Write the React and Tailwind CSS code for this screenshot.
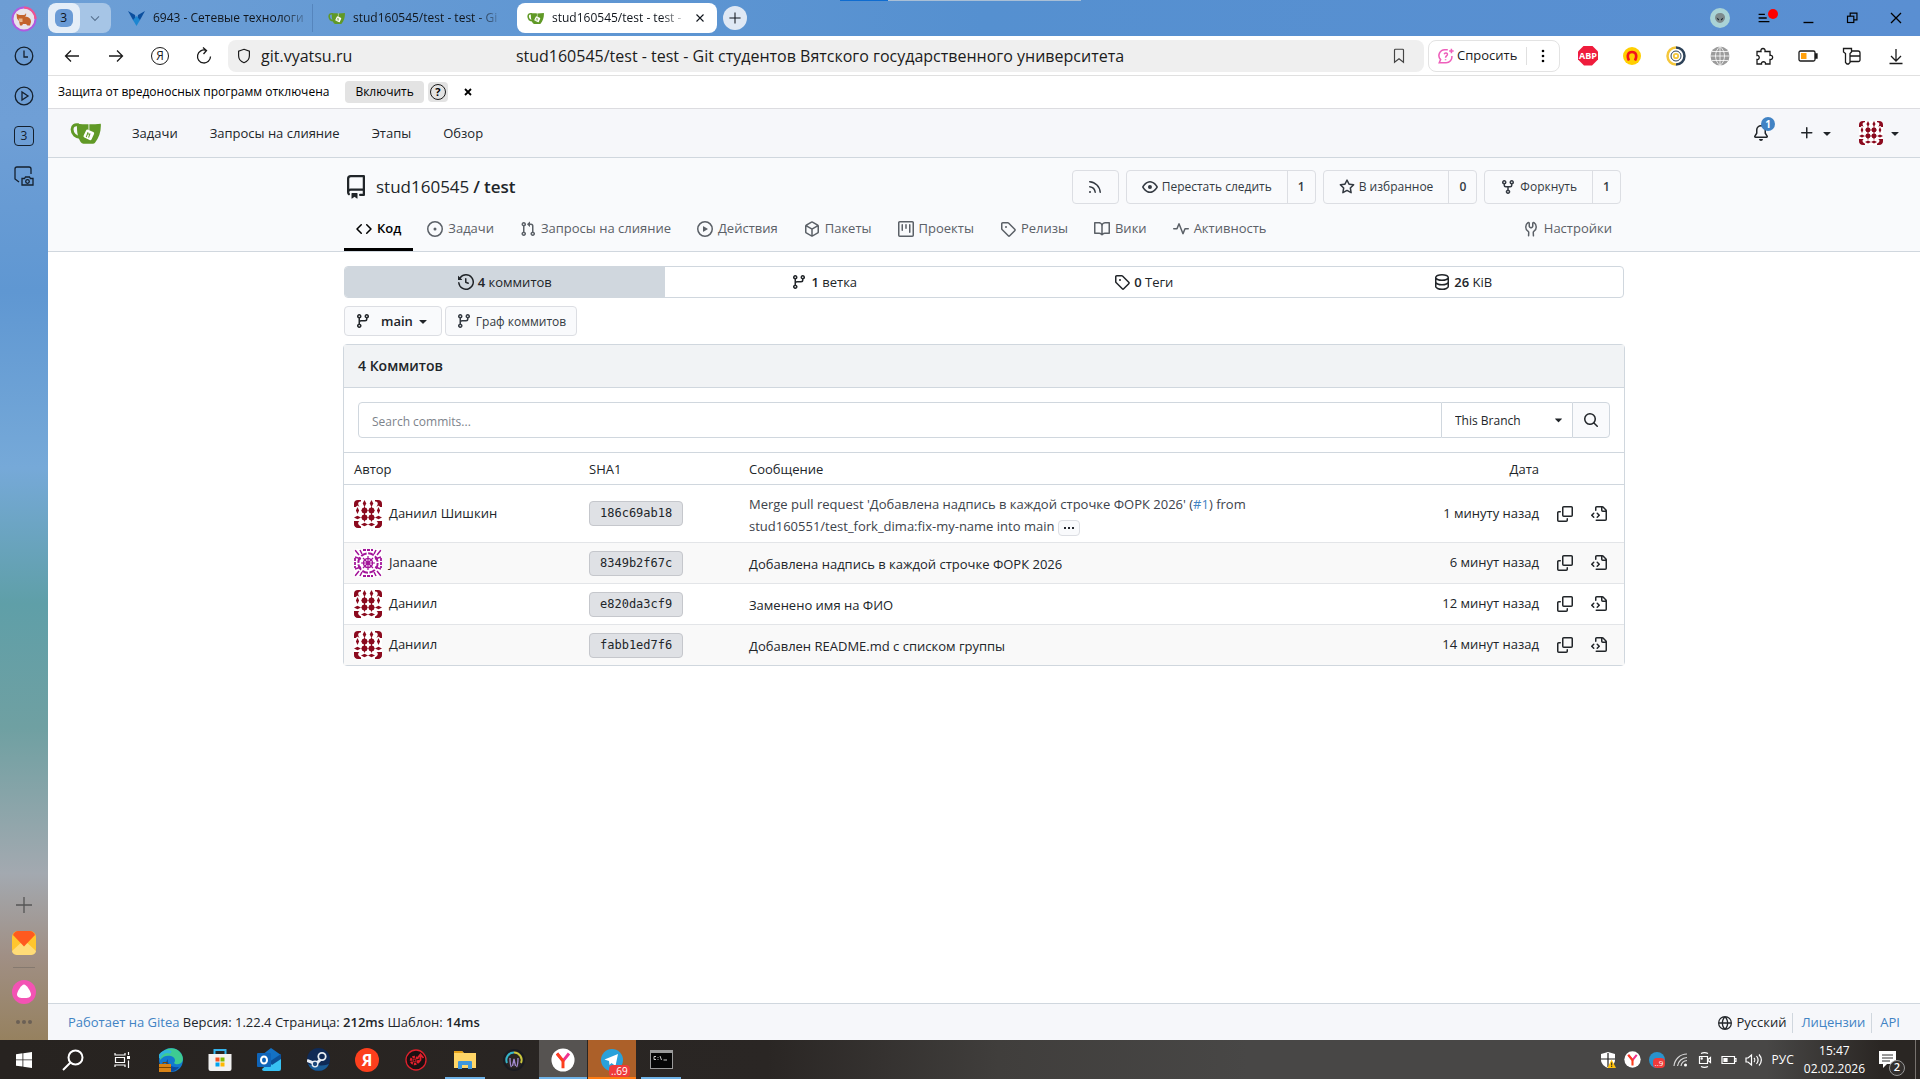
import React, { useState } from 'react';

// 16px octicons
const ICONS = {
    code: 'M4.72 3.22a.75.75 0 0 1 1.06 1.06L2.06 8l3.72 3.72a.75.75 0 1 1-1.06 1.06L.47 8.53a.75.75 0 0 1 0-1.06l4.25-4.25Zm6.56 0a.75.75 0 1 0-1.06 1.06L13.94 8l-3.72 3.72a.75.75 0 1 0 1.06 1.06l4.25-4.25a.75.75 0 0 0 0-1.06l-4.25-4.25Z',
    repo: 'M2 2.5A2.5 2.5 0 0 1 4.5 0h8.75a.75.75 0 0 1 .75.75v12.5a.75.75 0 0 1-.75.75h-2.5a.75.75 0 0 1 0-1.5h1.75v-2h-8a1 1 0 0 0-.714 1.7.75.75 0 1 1-1.072 1.05A2.495 2.495 0 0 1 2 11.5Zm10.5-1h-8a1 1 0 0 0-1 1v6.708A2.486 2.486 0 0 1 4.5 9h8ZM5 12.25a.25.25 0 0 1 .25-.25h3.5a.25.25 0 0 1 .25.25v3.25a.25.25 0 0 1-.4.2l-1.45-1.087a.249.249 0 0 0-.3 0L5.4 15.7a.25.25 0 0 1-.4-.2Z',
    issue: 'M8 9.5a1.5 1.5 0 1 0 0-3 1.5 1.5 0 0 0 0 3ZM8 0a8 8 0 1 1 0 16A8 8 0 0 1 8 0ZM1.5 8a6.5 6.5 0 1 0 13 0 6.5 6.5 0 0 0-13 0Z',
    pull: 'M1.5 3.25a2.25 2.25 0 1 1 3 2.122v5.256a2.251 2.251 0 1 1-1.5 0V5.372A2.25 2.25 0 0 1 1.5 3.25Zm5.677-.177L9.573.677A.25.25 0 0 1 10 .854V2.5h1A2.5 2.5 0 0 1 13.5 5v5.628a2.251 2.251 0 1 1-1.5 0V5a1 1 0 0 0-1-1h-1v1.646a.25.25 0 0 1-.427.177L7.177 3.427a.25.25 0 0 1 0-.354ZM3.75 2.5a.75.75 0 1 0 0 1.5.75.75 0 0 0 0-1.5Zm0 9.5a.75.75 0 1 0 0 1.5.75.75 0 0 0 0-1.5Zm8.25.75a.75.75 0 1 0 1.5 0 .75.75 0 0 0-1.5 0Z',
    play: 'M8 0a8 8 0 1 1 0 16A8 8 0 0 1 8 0ZM1.5 8a6.5 6.5 0 1 0 13 0 6.5 6.5 0 0 0-13 0Zm4.879-2.773 4.264 2.559a.25.25 0 0 1 0 .428l-4.264 2.559A.25.25 0 0 1 6 10.559V5.442a.25.25 0 0 1 .379-.215Z',
    package: 'm8.878.392 5.25 3.045c.54.314.872.89.872 1.514v6.098a1.75 1.75 0 0 1-.872 1.514l-5.25 3.045a1.75 1.75 0 0 1-1.756 0l-5.25-3.045A1.75 1.75 0 0 1 1 11.049V4.951c0-.624.332-1.201.872-1.514L7.122.392a1.75 1.75 0 0 1 1.756 0ZM7.875 1.69l-4.63 2.685L8 7.133l4.755-2.758-4.63-2.685a.248.248 0 0 0-.25 0ZM2.5 5.677v5.372c0 .09.047.171.125.216l4.625 2.683V8.432Zm6.25 8.271 4.625-2.683a.25.25 0 0 0 .125-.216V5.677L8.75 8.432Z',
    project: 'M1.75 0h12.5C15.216 0 16 .784 16 1.75v12.5A1.75 1.75 0 0 1 14.25 16H1.75A1.75 1.75 0 0 1 0 14.25V1.75C0 .784.784 0 1.75 0ZM1.5 1.75v12.5c0 .138.112.25.25.25h12.5a.25.25 0 0 0 .25-.25V1.75a.25.25 0 0 0-.25-.25H1.75a.25.25 0 0 0-.25.25ZM11.75 3a.75.75 0 0 1 .75.75v7.5a.75.75 0 0 1-1.5 0v-7.5a.75.75 0 0 1 .75-.75Zm-8.25.75a.75.75 0 0 1 1.5 0v5.5a.75.75 0 0 1-1.5 0ZM8 3a.75.75 0 0 1 .75.75v3.5a.75.75 0 0 1-1.5 0v-3.5A.75.75 0 0 1 8 3Z',
    tag: 'M1 7.775V2.75C1 1.784 1.784 1 2.75 1h5.025c.464 0 .91.184 1.238.513l6.25 6.25a1.75 1.75 0 0 1 0 2.474l-5.026 5.026a1.75 1.75 0 0 1-2.474 0l-6.25-6.25A1.752 1.752 0 0 1 1 7.775Zm1.5 0c0 .066.026.13.073.177l6.25 6.25a.25.25 0 0 0 .354 0l5.025-5.025a.25.25 0 0 0 0-.354l-6.25-6.25a.25.25 0 0 0-.177-.073H2.75a.25.25 0 0 0-.25.25ZM6 5a1 1 0 1 1 0 2 1 1 0 0 1 0-2Z',
    book: 'M0 1.75A.75.75 0 0 1 .75 1h4.253c1.227 0 2.317.59 3 1.501A3.743 3.743 0 0 1 11.006 1h4.245a.75.75 0 0 1 .75.75v10.5a.75.75 0 0 1-.75.75h-4.507a2.25 2.25 0 0 0-1.591.659l-.622.621a.75.75 0 0 1-1.06 0l-.622-.621A2.25 2.25 0 0 0 5.258 13H.75a.75.75 0 0 1-.75-.75Zm7.251 10.324.004-5.073-.002-2.253A2.25 2.25 0 0 0 5.003 2.5H1.5v9h3.757a3.75 3.75 0 0 1 1.994.574ZM8.755 4.75l-.004 7.322a3.752 3.752 0 0 1 1.992-.572H14.5v-9h-3.495a2.25 2.25 0 0 0-2.25 2.25Z',
    pulse: 'M6 2c.306 0 .582.187.696.471L10 10.731l1.304-3.26A.751.751 0 0 1 12 7h3.25a.75.75 0 0 1 0 1.5h-2.742l-1.812 4.528a.751.751 0 0 1-1.392 0L6 4.77 4.696 8.03A.75.75 0 0 1 4 8.5H.75a.75.75 0 0 1 0-1.5h2.742l1.812-4.529A.751.751 0 0 1 6 2Z',
    tools: 'M5.433 2.304A4.492 4.492 0 0 0 3.5 6c0 1.598.832 3.002 2.09 3.802.518.328.929.923.902 1.64v.008l-.164 3.337a.75.75 0 1 1-1.498-.073l.163-3.33c.002-.085-.05-.216-.207-.316A5.996 5.996 0 0 1 2 6a5.993 5.993 0 0 1 2.567-4.92 1.482 1.482 0 0 1 1.673-.04c.462.296.76.827.76 1.423v2.82c0 .082.041.16.11.206l.75.51a.25.25 0 0 0 .28 0l.75-.51A.249.249 0 0 0 9 5.282V2.463c0-.596.298-1.127.76-1.423a1.482 1.482 0 0 1 1.673.04A5.993 5.993 0 0 1 14 6a5.996 5.996 0 0 1-2.786 5.068c-.157.1-.209.23-.207.315l.163 3.33a.752.752 0 0 1-1.094.714.75.75 0 0 1-.404-.64l-.164-3.345c-.027-.717.384-1.312.902-1.64A4.495 4.495 0 0 0 12.5 6a4.492 4.492 0 0 0-1.933-3.696c-.024.017-.067.067-.067.16v2.818a1.75 1.75 0 0 1-.767 1.448l-.75.51a1.75 1.75 0 0 1-1.966 0l-.75-.51A1.75 1.75 0 0 1 5.5 5.282V2.463c0-.092-.043-.142-.067-.159Z',
    history: 'm.427 1.927 1.215 1.215a8.002 8.002 0 1 1-1.6 5.685.75.75 0 1 1 1.493-.154 6.5 6.5 0 1 0 1.18-4.458l1.358 1.358A.25.25 0 0 1 3.896 6H.25A.25.25 0 0 1 0 5.75V2.104a.25.25 0 0 1 .427-.177ZM7.75 4a.75.75 0 0 1 .75.75v2.992l2.028.812a.75.75 0 0 1-.557 1.392l-2.5-1A.751.751 0 0 1 7 8.25v-3.5A.75.75 0 0 1 7.75 4Z',
    branch: 'M9.5 3.25a2.25 2.25 0 1 1 3 2.122V6A2.5 2.5 0 0 1 10 8.5H6a1 1 0 0 0-1 1v1.128a2.251 2.251 0 1 1-1.5 0V5.372a2.25 2.25 0 1 1 1.5 0v1.836A2.493 2.493 0 0 1 6 7h4a1 1 0 0 0 1-1v-.628A2.25 2.25 0 0 1 9.5 3.25Zm-6 0a.75.75 0 1 0 1.5 0 .75.75 0 0 0-1.5 0Zm8.25-.75a.75.75 0 1 0 0 1.5.75.75 0 0 0 0-1.5ZM4.25 12a.75.75 0 1 0 0 1.5.75.75 0 0 0 0-1.5Z',
    fork: 'M5 5.372v.878c0 .414.336.75.75.75h4.5a.75.75 0 0 0 .75-.75v-.878a2.25 2.25 0 1 1 1.5 0v.878a2.25 2.25 0 0 1-2.25 2.25h-1.5v2.128a2.251 2.251 0 1 1-1.5 0V8.5h-1.5A2.25 2.25 0 0 1 3.5 6.25v-.878a2.25 2.25 0 1 1 1.5 0ZM5 3.25a.75.75 0 1 0-1.5 0 .75.75 0 0 0 1.5 0Zm6.75.75a.75.75 0 1 0 0-1.5.75.75 0 0 0 0 1.5Zm-3 8.75a.75.75 0 1 0-1.5 0 .75.75 0 0 0 1.5 0Z',
    database: 'M1 3.5c0-.626.292-1.165.7-1.59.406-.422.956-.767 1.579-1.041C4.525.32 6.195 0 8 0c1.805 0 3.475.32 4.722.869.622.274 1.172.62 1.578 1.04.408.426.7.965.7 1.591v9c0 .626-.292 1.165-.7 1.59-.406.422-.956.767-1.579 1.041C11.476 15.68 9.806 16 8 16c-1.805 0-3.475-.32-4.721-.869-.623-.274-1.173-.62-1.579-1.04-.408-.426-.7-.965-.7-1.591Zm1.5 0c0 .133.058.318.282.551.227.237.591.483 1.101.707C4.898 5.205 6.353 5.5 8 5.5c1.646 0 3.101-.295 4.118-.742.508-.224.873-.471 1.1-.708.224-.232.282-.417.282-.55 0-.133-.058-.318-.282-.551-.227-.237-.591-.483-1.101-.707C11.102 1.795 9.647 1.5 8 1.5c-1.646 0-3.101.295-4.118.742-.508.224-.873.471-1.1.708-.224.232-.282.417-.282.55Zm0 4.5c0 .133.058.318.282.551.227.237.591.483 1.101.707C4.898 9.705 6.353 10 8 10c1.646 0 3.101-.295 4.118-.742.508-.224.873-.471 1.1-.708.224-.232.282-.417.282-.55V5.724c-.241.15-.503.286-.778.407C11.475 6.68 9.805 7 8 7c-1.805 0-3.475-.32-4.721-.869a6.15 6.15 0 0 1-.779-.407Zm0 2.225V12.5c0 .133.058.318.282.55.227.237.592.484 1.1.708 1.016.447 2.471.742 4.118.742 1.647 0 3.102-.295 4.117-.742.51-.224.874-.47 1.101-.707.224-.233.282-.418.282-.551v-2.275c-.241.15-.503.285-.778.406-1.247.549-2.917.869-4.722.869-1.805 0-3.475-.32-4.721-.869a6.327 6.327 0 0 1-.779-.406Z',
    rss: 'M2.002 2.725a.75.75 0 0 1 .797-.699C8.79 2.42 13.58 7.21 13.974 13.201a.75.75 0 0 1-1.497.098 10.502 10.502 0 0 0-9.776-9.776.747.747 0 0 1-.7-.798ZM2.84 7.05h-.002a7.002 7.002 0 0 1 6.113 6.111.75.75 0 0 1-1.49.178 5.503 5.503 0 0 0-4.8-4.8.75.75 0 0 1 .179-1.489ZM2 13a1 1 0 1 1 2 0 1 1 0 0 1-2 0Z',
    eye: 'M8 2c1.981 0 3.671.992 4.933 2.078 1.27 1.091 2.187 2.345 2.637 3.023a1.62 1.62 0 0 1 0 1.798c-.45.678-1.367 1.932-2.637 3.023C11.67 13.008 9.981 14 8 14c-1.981 0-3.671-.992-4.933-2.078C1.797 10.83.88 9.576.43 8.898a1.62 1.62 0 0 1 0-1.798c.45-.677 1.367-1.931 2.637-3.022C4.33 2.992 6.019 2 8 2ZM1.679 7.932a.12.12 0 0 0 0 .136c.411.622 1.241 1.75 2.366 2.717C5.176 11.758 6.527 12.5 8 12.5c1.473 0 2.825-.742 3.955-1.715 1.124-.967 1.954-2.096 2.366-2.717a.12.12 0 0 0 0-.136c-.412-.621-1.242-1.75-2.366-2.717C10.824 4.242 9.473 3.5 8 3.5c-1.473 0-2.825.742-3.955 1.715-1.124.967-1.954 2.096-2.366 2.717ZM8 10a2 2 0 1 1-.001-3.999A2 2 0 0 1 8 10Z',
    star: 'M8 .25a.75.75 0 0 1 .673.418l1.882 3.815 4.21.612a.75.75 0 0 1 .416 1.279l-3.046 2.97.719 4.192a.751.751 0 0 1-1.088.791L8 12.347l-3.766 1.98a.75.75 0 0 1-1.088-.79l.72-4.194L.818 6.374a.75.75 0 0 1 .416-1.28l4.21-.611L7.327.668A.75.75 0 0 1 8 .25Zm0 2.445L6.615 5.5a.75.75 0 0 1-.564.41l-3.097.45 2.24 2.184a.75.75 0 0 1 .216.664l-.528 3.084 2.769-1.456a.75.75 0 0 1 .698 0l2.77 1.456-.53-3.084a.75.75 0 0 1 .216-.664l2.24-2.183-3.096-.45a.75.75 0 0 1-.564-.41L8 2.694Z',
    copy: 'M0 6.75C0 5.784.784 5 1.75 5h1.5a.75.75 0 0 1 0 1.5h-1.5a.25.25 0 0 0-.25.25v7.5c0 .138.112.25.25.25h7.5a.25.25 0 0 0 .25-.25v-1.5a.75.75 0 0 1 1.5 0v1.5A1.75 1.75 0 0 1 9.25 16h-7.5A1.75 1.75 0 0 1 0 14.25ZM5 1.75C5 .784 5.784 0 6.75 0h7.5C15.216 0 16 .784 16 1.75v7.5A1.75 1.75 0 0 1 14.25 11h-7.5A1.75 1.75 0 0 1 5 9.25Zm1.75-.25a.25.25 0 0 0-.25.25v7.5c0 .138.112.25.25.25h7.5a.25.25 0 0 0 .25-.25v-7.5a.25.25 0 0 0-.25-.25Z',
    search: 'M10.68 11.74a6 6 0 0 1-7.922-8.982 6 6 0 0 1 8.982 7.922l3.04 3.04a.749.749 0 0 1-.326 1.275.749.749 0 0 1-.734-.215ZM11.5 7a4.499 4.499 0 1 0-8.997 0A4.499 4.499 0 0 0 11.5 7Z',
    bell: 'M8 16a2 2 0 0 0 1.985-1.75c.017-.137-.097-.25-.235-.25h-3.5c-.138 0-.252.113-.235.25A2 2 0 0 0 8 16ZM3 5a5 5 0 0 1 10 0v2.947c0 .05.015.098.042.139l1.703 2.555A1.519 1.519 0 0 1 13.482 13H2.518a1.516 1.516 0 0 1-1.263-2.36l1.703-2.554A.255.255 0 0 0 3 7.947Zm5-3.5A3.5 3.5 0 0 0 4.5 5v2.947c0 .346-.102.683-.294.97l-1.703 2.556a.017.017 0 0 0-.003.01l.001.006.004.006.006.004.007.001h10.964l.007-.001.006-.004.004-.006.001-.007a.017.017 0 0 0-.003-.01l-1.703-2.554a1.745 1.745 0 0 1-.294-.97V5A3.5 3.5 0 0 0 8 1.5Z',
    plus: 'M7.75 2a.75.75 0 0 1 .75.75V7h4.25a.75.75 0 0 1 0 1.5H8.5v4.25a.75.75 0 0 1-1.5 0V8.5H2.75a.75.75 0 0 1 0-1.5H7V2.75A.75.75 0 0 1 7.75 2Z',
    caret: 'm4.427 7.427 3.396 3.396a.25.25 0 0 0 .354 0l3.396-3.396A.25.25 0 0 0 11.396 7H4.604a.25.25 0 0 0-.177.427Z',
    globe: 'M8 0a8 8 0 1 1 0 16A8 8 0 0 1 8 0ZM5.78 8.75a9.64 9.64 0 0 0 1.363 4.177c.255.426.542.832.857 1.215.245-.296.551-.705.857-1.215A9.64 9.64 0 0 0 10.22 8.75Zm4.44-1.5a9.64 9.64 0 0 0-1.363-4.177c-.307-.51-.612-.919-.857-1.215a9.927 9.927 0 0 0-.857 1.215A9.64 9.64 0 0 0 5.78 7.25Zm-5.944 1.5H1.543a6.507 6.507 0 0 0 4.666 5.5c-.123-.181-.24-.365-.352-.552-.715-1.192-1.437-2.874-1.581-4.948Zm-2.733-1.5h2.733c.144-2.074.866-3.756 1.58-4.948.12-.197.237-.381.353-.552a6.507 6.507 0 0 0-4.666 5.5Zm10.181 1.5c-.144 2.074-.866 3.756-1.58 4.948-.12.197-.237.381-.353.552a6.507 6.507 0 0 0 4.666-5.5Zm2.733-1.5a6.507 6.507 0 0 0-4.666-5.5c.123.181.24.365.353.552.714 1.192 1.436 2.874 1.58 4.948Z',
    file: 'M4 1.75C4 .784 4.784 0 5.75 0h5.586c.464 0 .909.184 1.237.513l2.914 2.914c.329.328.513.773.513 1.237v8.586A1.75 1.75 0 0 1 14.25 15h-9a.75.75 0 0 1 0-1.5h9a.25.25 0 0 0 .25-.25V6h-2.75A1.75 1.75 0 0 1 10 4.25V1.5H5.75a.25.25 0 0 0-.25.25v2.5a.75.75 0 0 1-1.5 0Zm1.72 4.97a.75.75 0 0 1 1.06 0l2 2a.75.75 0 0 1 0 1.06l-2 2a.749.749 0 0 1-1.275-.326.749.749 0 0 1 .215-.734l1.47-1.47-1.47-1.47a.75.75 0 0 1 0-1.06ZM3.28 7.78 1.81 9.25l1.47 1.47a.751.751 0 0 1-.018 1.042.751.751 0 0 1-1.042.018l-2-2a.75.75 0 0 1 0-1.06l2-2a.751.751 0 0 1 1.042.018.751.751 0 0 1 .018 1.042Zm8.22-6.218V4.25c0 .138.112.25.25.25h2.688l-.011-.013-2.914-2.914-.013-.011Z',
};

const Icon = ({ name, size = 16 }) => (
    <svg width={size} height={size} viewBox="0 0 16 16" fill="currentColor" className="shrink-0" aria-hidden="true">
        <path fillRule="evenodd" d={ICONS[name]} />
    </svg>
);

// Thin outline glyphs used by the browser chrome
const Line = ({ d, size = 20, width = 1.3, children }) => (
    <svg width={size} height={size} viewBox="0 0 20 20" fill="none" stroke="currentColor" strokeWidth={width} className="shrink-0" aria-hidden="true">
        {d && <path d={d} />}
        {children}
    </svg>
);

const GiteaLogo = ({ size = 30 }) => (
    <svg width={size} height={size} viewBox="0 0 30 30" className="shrink-0" aria-hidden="true">
        <path d="M8.500 6.800C4.500 6 2 7.500 2 11c0 4.500 3.500 7.800 8.500 8" fill="none" stroke="#609926" strokeWidth="2.800" />
        <path d="M7 5.500c6 .8 16 .8 22.800 0 .5 7-1.600 13.600-5.600 18.400-.5.600-1.200.9-2 .9H13c-1 0-1.900-.5-2.500-1.300C8 20 6 13 7 5.500Z" fill="#609926" />
        <rect x="14" y="12" width="8.500" height="8.500" rx="1.500" fill="#fff" transform="rotate(25 18.200 16.200)" />
        <path d="M17.500 13.800l-1.800 4.700M17.200 15.500h2l-1.200 3.500" stroke="#609926" strokeWidth="1" fill="none" />
        <path d="M18.300 5.800v6.500" stroke="#fff" strokeWidth=".8" />
    </svg>
);

const RedIdenticon = ({ size = 28 }) => (
    <svg width={size} height={size} viewBox="0 0 28 28" className="shrink-0 rounded-sm" aria-hidden="true">
        <rect width="28" height="28" fill="#fff" />
        <g fill="#8b0a1e">
            <path d="M0 0H7V1.500C4.500 1.500 3 3 5.500 7 4 6 3 5 2 7H0ZM28 0H21V1.500C23.500 1.500 25 3 22.500 7 24 6 25 5 26 7H28Z" />
            <path d="M0 21H5.500C3.500 22.500 3.500 24.500 7 26.500V28H2L0 26ZM28 21H22.500C24.500 22.500 24.500 24.500 21 26.500V28H26L28 26Z" />
            {[10.5, 17.5].map((x) => (
                <React.Fragment key={x}>
                    <path d={`M${x} 0l1.800 3.500-1.800 3.500-1.800-3.500Z`} />
                    <circle cx={x} cy="10.500" r="2.900" />
                    <circle cx={x} cy="17.500" r="2.900" />
                    <path d={`M${x - 3.5} 24.500l3.500-1.700 3.500 1.700-3.500 1.700Z`} />
                    <path d={`M${x - 0.5} 6.500h1v15h-1ZM${x - 3} 10h6v1h-6ZM${x - 3} 17h6v1h-6Z`} />
                </React.Fragment>
            ))}
            <path d="M3.500 7l1.600 3.500L3.500 14l-1.600-3.500ZM24.500 7l1.600 3.500-1.600 3.500-1.600-3.500Z" />
            <path d="M0 17.500l3.500-1.800L7 17.500l-3.500 1.800ZM21 17.500l3.500-1.800 3.500 1.800-3.500 1.800Z" />
        </g>
    </svg>
);

const PurpleIdenticon = () => (
    <svg width="28" height="28" viewBox="0 0 28 28" className="shrink-0 rounded-sm" aria-hidden="true">
        <rect width="28" height="28" fill="#fff" />
        <g fill="none" stroke="#a3159a" strokeWidth="1.500">
            <circle cx="14" cy="14" r="9.700" strokeWidth="2" strokeDasharray="6 1.600" />
            <circle cx="14" cy="14" r="4.500" />
            <path d="M9 9l10 10M19 9L9 19M14 7v14M7 14h14" strokeWidth="1.200" />
            <path d="M1 9v10M27 9v10M9 1h10M9 27h10" strokeWidth="1.800" strokeDasharray="3 1" />
            <path d="M1 1l4 5M27 1l-4 5M1 27l4-5M27 27l-4-5M1 8l6 2M27 8l-6 2M1 20l6-2M27 20l-6-2M6 1l2 4M22 1l-2 4M6 27l2-4M22 27l-2-4" />
        </g>
        <circle cx="14" cy="14" r="1.800" fill="#a3159a" />
    </svg>
);

const YandexY = ({ size = 26 }) => (
    <svg width={size} height={size} viewBox="0 0 26 26" aria-hidden="true">
        <circle cx="13" cy="13" r="12.500" fill="#fff" />
        <path d="M6.500 6l6.500 8 6.500-8" stroke="#f0338f" strokeWidth="3.200" fill="none" />
        <path d="M6.500 6L13 14v8" stroke="#fc3f1d" strokeWidth="3.200" fill="none" />
    </svg>
);

const BROWSER_TABS = [
    { title: '6943 - Сетевые технологи', icon: 'moodle' },
    { title: 'stud160545/test - test - Gi', icon: 'gitea' },
    { title: 'stud160545/test - test -', icon: 'gitea', active: true },
];

const TabStrip = () => (
    <div className="relative flex h-9 items-center bg-gradient-to-r from-[#6d9fd6] via-[#5590d0] to-[#5a8fd2] pr-0.5 text-sm text-[#10151c]">
        <div className="absolute left-[792px] top-0 flex h-px w-[241px]">
            <span className="w-12 bg-[#0f6cd0]" />
            <span className="grow bg-[#a9bfd6]" />
        </div>
        <div className="flex h-[30px] w-[63px] shrink-0 overflow-hidden rounded-lg bg-white/40">
            <button type="button" className="flex w-8 items-center justify-center rounded-lg bg-white/70">
                <span className="flex h-[18px] w-[18px] items-center justify-center rounded-md bg-[#6a9bd6] text-xs">3</span>
            </button>
            <button type="button" aria-label="Группы вкладок" className="flex w-8 items-center justify-center text-[#56718f]">
                <Line d="M5 8l5 5 5-5" size={16} />
            </button>
        </div>
        <div className="ml-1.5 flex items-center">
            {BROWSER_TABS.map((tab, i) => (
                <div
                    key={i}
                    className={tab.active
                        ? 'flex h-[30px] w-[200px] items-center gap-2 rounded-lg bg-white px-2.5'
                        : 'flex h-[30px] w-[200px] items-center gap-2 px-[11px]'}
                >
                    {tab.icon === 'gitea' ? <GiteaLogo size={17} /> : (
                        <svg width="17" height="17" viewBox="0 0 17 17" className="shrink-0" aria-hidden="true">
                            <path d="M0 1l7 4 1 6-3-1Z" fill="#0b4f9e" />
                            <path d="M17 1l-7 4-1 6 3-1Z" fill="#0b4f9e" />
                            <path d="M5 10l3.500-4L12 10l-3.500 6Z" fill="#1c86d1" />
                        </svg>
                    )}
                    <span className="whitespace-nowrap bg-[linear-gradient(to_right,#10151c_85%,#10151c40)] bg-clip-text text-xs text-transparent">
                        {tab.title}
                    </span>
                    {tab.active && (
                        <button type="button" aria-label="Закрыть вкладку" className="ml-auto"><Line d="M5 5l10 10M15 5L5 15" size={14} width={1.600} /></button>
                    )}
                    {i === 0 && <span className="ml-auto h-7 w-px shrink-0 bg-[#5585bd]" />}
                </div>
            ))}
        </div>
        <button type="button" aria-label="Новая вкладка" className="ml-1.5 flex h-6 w-6 items-center justify-center rounded-full bg-[#dfe8f4]">
            <Line d="M10 3v14M3 10h14" size={16} />
        </button>
        <div className="ml-auto flex items-center text-black">
            <button type="button" aria-label="Профиль" className="flex w-11 justify-center">
                <svg width="20" height="20" viewBox="0 0 20 20" aria-hidden="true">
                    <circle cx="10" cy="10" r="10" fill="#a9d3d6" />
                    <path d="M10 5c3 0 5 2 5 4.500S12.500 15 10 15s-5-3-5-5.500S7 5 10 5Z" fill="#7d8a8c" />
                    <path d="M6.500 9.500l2.700 1.700-1 1.300ZM13.500 9.500l-2.700 1.700 1 1.300Z" fill="#16202a" />
                </svg>
            </button>
            <button type="button" aria-label="Меню" className="relative flex w-11 justify-center">
                <Line d="M4 6h7M4 10h9M4 14h12" size={18} width={1.500} />
                <span className="absolute right-2 top-0 h-2.5 w-2.5 rounded-full bg-[#ff0000]" />
            </button>
            <button type="button" aria-label="Свернуть" className="flex w-11 justify-center"><Line d="M5 15h11" size={18} width={1.500} /></button>
            <button type="button" aria-label="Окно" className="flex w-11 justify-center">
                <Line size={18}>
                    <rect x="5" y="8" width="7" height="7" />
                    <path d="M8 8V4.500h7.500v7.500H12" />
                </Line>
            </button>
            <button type="button" aria-label="Закрыть" className="flex w-11 justify-center"><Line d="M5 5l10 10M15 5L5 15" size={20} /></button>
        </div>
    </div>
);

const Toolbar = () => (
    <div className="flex h-10 items-center border-b border-[#e0e0e0] bg-white px-0.5 text-[#1b1b1b]">
        <button type="button" aria-label="Назад" className="flex w-11 shrink-0 justify-center"><Line d="M17 10H3.500M9 4.500L3.500 10 9 15.500" size={20} /></button>
        <button type="button" aria-label="Вперёд" className="flex w-11 shrink-0 justify-center"><Line d="M3 10h13.500M11 4.500l5.500 5.500-5.500 5.500" size={20} /></button>
        <button type="button" aria-label="Яндекс" className="flex w-11 shrink-0 justify-center">
            <span className="flex h-[18px] w-[18px] items-center justify-center rounded-full border border-[#1b1b1b] text-xs">Я</span>
        </button>
        <button type="button" aria-label="Обновить" className="flex w-11 shrink-0 justify-center"><Line d="M16.500 10.500A6.500 6.500 0 1 1 12 4.300M9 1.500l3.500 3-3 3.500" size={20} /></button>
        <div className="relative ml-0.5 flex h-8 grow items-center rounded-lg bg-[#efefef] pl-[7px] pr-4 text-base">
            <Line d="M10 2.500l6 2.200v5c0 4-2.500 6.500-6 7.800-3.500-1.300-6-3.800-6-7.800v-5Z" size={18} />
            <span className="ml-2">git.vyatsu.ru</span>
            <span className="absolute inset-x-0 pr-3 text-center">stud160545/test - test - Git студентов Вятского государственного университета</span>
            <button type="button" aria-label="Закладка" className="relative ml-auto text-[#444]"><Line d="M5 3.500C5 3 5.500 2.500 6 2.500h8c.5 0 1 .5 1 1V17l-5-4-5 4Z" size={18} /></button>
        </div>
        <div className="ml-1 flex h-8 w-[132px] shrink-0 items-center rounded-lg border border-[#e3e3e3]">
            <button type="button" className="flex grow items-center gap-0.5 pl-2 text-[13px]">
                <span className="text-[#ee5fbb]">
                    <Line size={18} width={1.700}>
                        <path d="M12 3H9a6.500 6.500 0 0 0-5 11l-1.500 3.500H10a6.500 6.500 0 0 0 6.500-7.500M8 8c.5-2 4-1.500 3.500.5C11 10 9.500 10 9.500 12M9.500 13.500v1.300M16 2v5M13.500 4.500h5" />
                    </Line>
                </span>
                Спросить
            </button>
            <span className="h-[18px] w-px bg-[#e0e0e0]" />
            <button type="button" aria-label="Ещё" className="flex w-8 justify-center">
                <svg width="4" height="14" viewBox="0 0 4 14" aria-hidden="true"><circle cx="2" cy="2" r="1.300" /><circle cx="2" cy="7" r="1.300" /><circle cx="2" cy="12" r="1.300" /></svg>
            </button>
        </div>
        <div className="ml-1.5 flex shrink-0 items-center">
            <button type="button" className="flex w-11 justify-center">
                <span className="flex h-5 w-5 items-center justify-center bg-[#ef1c3c] text-[9px] font-bold text-white [clip-path:polygon(30%_0,70%_0,100%_30%,100%_70%,70%_100%,30%_100%,0_70%,0_30%)]">ABP</span>
            </button>
            <button type="button" aria-label="Расширение" className="flex w-11 justify-center">
                <svg width="18" height="18" viewBox="0 0 18 18" aria-hidden="true"><circle cx="9" cy="9" r="9" fill="#ffcf00" /><path d="M6 13.500c-2.500-5-1-8.500 3-8.500s5.500 3.500 3 8.500" stroke="#f3121b" strokeWidth="2.600" fill="none" /></svg>
            </button>
            <button type="button" aria-label="Расширение" className="flex w-11 justify-center">
                <svg width="20" height="20" viewBox="0 0 20 20" fill="none" strokeWidth="2.500" aria-hidden="true">
                    <path d="M10 1.500a8.500 8.500 0 0 0 0 17" stroke="#f5c73b" /><path d="M10 1.500a8.500 8.500 0 0 1 0 17" stroke="#2d4258" />
                    <circle cx="10" cy="10" r="5" stroke="#2d4258" strokeWidth="1" /><circle cx="10" cy="10" r="2.200" stroke="#f5c73b" strokeWidth="1.800" />
                </svg>
            </button>
            <button type="button" aria-label="Расширение" className="flex w-11 justify-center">
                <svg width="20" height="20" viewBox="0 0 20 20" fill="none" aria-hidden="true">
                    <circle cx="10" cy="10" r="9.500" fill="#9b9b9b" />
                    <path d="M10 0v20M0 10h20M2 5.500h16M2 14.500h16M10 .5c-6 5-6 14 0 19M10 .5c6 5 6 14 0 19" stroke="#fff" strokeWidth=".8" />
                </svg>
            </button>
            <button type="button" aria-label="Расширения" className="flex w-11 justify-center">
                <Line d="M3 5.500h4c-1-4 5-4 4 0h5v4c3.500-1 3.500 4.500 0 4v4.500h-4.500c.5-3-4.500-3-4 0H3v-4.500c3 .5 3-4.500 0-4Z" size={20} />
            </button>
            <button type="button" aria-label="Батарея" className="flex w-11 justify-center">
                <Line size={20}>
                    <rect x="1" y="5" width="16" height="10" rx="1.500" />
                    <path d="M17.500 8v4h1.500V8Z" fill="currentColor" />
                    <rect x="3" y="7" width="5.500" height="6" fill="#ff9f0a" stroke="none" />
                </Line>
            </button>
            <button type="button" aria-label="Пароли" className="flex w-11 justify-center">
                <Line size={20}>
                    <path d="M1.500 2.500h8v3.500L8 7.500V16.500l-1.500 1.500H5l-1.500-1.500v-9L1.500 6ZM10 5h6a2 2 0 0 1 2 2v7a1.500 1.500 0 0 1-1.500 1.500H8M8.500 10H18" />
                </Line>
            </button>
            <button type="button" aria-label="Загрузки" className="flex w-11 justify-center"><Line d="M10 3v11.500M5 10l5 5 5-5M3.500 17.500h13" size={20} /></button>
        </div>
    </div>
);

const InfoBar = () => (
    <div className="flex h-[33px] items-center border-b border-[#dcdce0] bg-white pl-2.5 text-xs text-black">
        <span>Защита от вредоносных программ отключена</span>
        <button type="button" className="ml-4 h-[22px] rounded bg-[#e3e3e3] px-2.5">Включить</button>
        <button type="button" className="ml-1 flex h-5 w-5 items-center justify-center rounded bg-[#e3e3e3]">
            <span className="flex h-4 w-4 items-center justify-center rounded-full border border-[#1b1b1b] text-[11px] font-bold">?</span>
        </button>
        <button type="button" aria-label="Скрыть" className="ml-3.5"><Line d="M5 5l10 10M15 5L5 15" size={12} width={3} /></button>
    </div>
);

const Sidebar = () => (
    <aside className="flex w-12 shrink-0 flex-col items-center bg-[linear-gradient(to_bottom,#6d9dd4_0%,#6f9fd6_12%,#5f97d2_28%,#76a9d8_45%,#5f9fa8_58%,#6fa0a2_70%,#a3a9b0_84%,#a08f84_92%,#96815f_100%)] text-[#14202e]">
        <button type="button" aria-label="Аккаунт" className="mt-1.5">
            <svg width="26" height="26" viewBox="0 0 26 26" aria-hidden="true">
                <circle cx="13" cy="13" r="11.500" fill="#e9e4ea" stroke="#b05ae0" strokeWidth="2" />
                <path d="M13 1.500A11.500 11.500 0 0 1 24.500 13" stroke="#f0558f" strokeWidth="2" fill="none" />
                <path d="M5.500 7.500c1.500 1.500 3 1.500 4.500 1.500h3c1 0 1.500-1 2-2 .5 2 0 3-1 3.500 4 .5 6 2 6 5.500l-1 3.500h-2.500L15 18h-3l-1 1.500H9L8 15l-2-2.500Z" fill="#c4632c" />
                <path d="M7.500 12.500h4v3.500h-3Z" fill="#e9b58a" />
            </svg>
        </button>
        <div className="mt-3.5 flex flex-col items-center gap-5">
            <button type="button" aria-label="История"><Line size={20}><circle cx="10" cy="10" r="8.800" /><path d="M10 4.500V11h4" /></Line></button>
            <button type="button" aria-label="Видео"><Line size={20}><circle cx="10" cy="10" r="8.800" /><path d="M8 6v8l6-4Z" /></Line></button>
            <button type="button" className="flex h-5 w-5 items-center justify-center rounded border border-[#14202e] text-xs">3</button>
            <button type="button" aria-label="Снимок"><Line size={20}><path d="M5 16L1 13V3a2 2 0 0 1 2-2h12a2 2 0 0 1 2 2v5" /><path d="M8 12.500h2.500l1-1.500h4l1 1.500H19v6.500H8Z" /><circle cx="13.500" cy="15.500" r="1.800" /></Line></button>
        </div>
        <div className="mt-auto flex flex-col items-center pb-4">
            <button type="button" aria-label="Добавить" className="mb-4 text-[#555]"><Line d="M10 2v16M2 10h16" size={20} /></button>
            <button type="button" aria-label="Почта">
                <svg width="24" height="24" viewBox="0 0 24 24" aria-hidden="true">
                    <rect width="24" height="24" rx="6" fill="#ffc62e" />
                    <path d="M0 20L12 9l12 11c-.5 3-3 4-6 4H6c-3 0-5.500-1-6-4Z" fill="#ffdc78" />
                    <path d="M1 4C2 1.500 4 0 6 0h12c2 0 4 1.500 5 4L12 15.500Z" fill="#ff5a1f" />
                </svg>
            </button>
            <span className="my-3 h-px w-[22px] bg-[#85796f]" />
            <button type="button" aria-label="Алиса">
                <svg width="24" height="24" viewBox="0 0 24 24" aria-hidden="true">
                    <circle cx="12" cy="12" r="12" fill="#f353b4" />
                    <path d="M12 4.500c2.500 0 7 7 7 10s-3.500 3.500-7 3.500-7-.5-7-3.500 4.500-10 7-10Z" fill="#fff" />
                </svg>
            </button>
            <button type="button" aria-label="Ещё" className="mt-4 flex gap-0.5">
                <span className="h-1 w-1 rounded-full bg-[#6b6055]" />
                <span className="h-1 w-1 rounded-full bg-[#6b6055]" />
                <span className="h-1 w-1 rounded-full bg-[#6b6055]" />
            </button>
        </div>
    </aside>
);

const SiteNav = () => (
    <nav className="flex h-[49px] items-center border-b border-[#d0d7de] bg-[#f6f7fa] pl-[22px] pr-[17px]">
        <a href="#home" aria-label="Gitea"><GiteaLogo size={31} /></a>
        <div className="ml-[31px] flex gap-8 pt-0.5">
            <a href="#issues">Задачи</a>
            <a href="#pulls">Запросы на слияние</a>
            <a href="#milestones">Этапы</a>
            <a href="#explore">Обзор</a>
        </div>
        <div className="ml-auto flex items-center">
            <a href="#notifications" aria-label="Уведомления" className="relative mr-[30px]">
                <Icon name="bell" />
                <span className="absolute -top-2 left-2 flex h-3.5 w-3.5 items-center justify-center rounded-full bg-[#4183c4] text-[10px] font-bold text-white">1</span>
            </a>
            <button type="button" aria-label="Создать" className="mr-6 flex items-center gap-1"><Icon name="plus" /><Icon name="caret" /></button>
            <button type="button" aria-label="Профиль" className="flex items-center gap-1"><RedIdenticon size={24} /><Icon name="caret" /></button>
        </div>
    </nav>
);

const REPO_ACTIONS = [
    { icon: 'eye', label: 'Перестать следить', count: 1 },
    { icon: 'star', label: 'В избранное', count: 0 },
    { icon: 'fork', label: 'Форкнуть', count: 1 },
];

const REPO_TABS = [
    { icon: 'code', label: 'Код', active: true },
    { icon: 'issue', label: 'Задачи' },
    { icon: 'pull', label: 'Запросы на слияние' },
    { icon: 'play', label: 'Действия' },
    { icon: 'package', label: 'Пакеты' },
    { icon: 'project', label: 'Проекты' },
    { icon: 'tag', label: 'Релизы' },
    { icon: 'book', label: 'Вики' },
    { icon: 'pulse', label: 'Активность' },
];

const RepoHeader = () => (
    <header className="border-b border-[#d0d7de] bg-[#f9fafc] pt-3">
        <div className="mx-auto max-w-[1280px]">
            <div className="flex items-center pr-[3px]">
                <Icon name="repo" size={24} />
                <div className="ml-2 text-[17px]">
                    <a href="#owner">stud160545</a>
                    <span className="mx-1 font-semibold">/</span>
                    <a href="#repo" className="font-semibold">test</a>
                </div>
                <div className="ml-auto flex gap-[7px] text-xs text-[#343a42]">
                    <a href="#rss" aria-label="RSS" className="flex h-[34px] w-[47px] items-center justify-center rounded border border-[#dcdee3]"><Icon name="rss" /></a>
                    {REPO_ACTIONS.map((action) => (
                        <div key={action.label} className="flex h-[34px] rounded border border-[#dcdee3]">
                            <button type="button" className="flex items-center gap-1 px-[15px]"><Icon name={action.icon} />{action.label}</button>
                            <a href="#list" className="flex w-[28px] items-center justify-center border-l border-[#dcdee3] font-semibold">{action.count}</a>
                        </div>
                    ))}
                </div>
            </div>
            <div className="mt-1.5 flex gap-0.5 text-[#5b6067]">
                {REPO_TABS.map((tab) => (
                    <a
                        key={tab.label}
                        href="#tab"
                        className={tab.active
                            ? 'flex h-[41px] items-center gap-[5px] border-b-[3px] border-black px-3 pb-px font-semibold text-black'
                            : 'flex h-[41px] items-center gap-[5px] px-3 pb-1'}
                    >
                        <Icon name={tab.icon} />{tab.label}
                    </a>
                ))}
                <a href="#settings" className="ml-auto flex h-[41px] items-center gap-[5px] px-3 pb-1"><Icon name="tools" />Настройки</a>
            </div>
        </div>
    </header>
);

const STATS = [
    { icon: 'history', value: '4', label: 'коммитов' },
    { icon: 'branch', value: '1', label: 'ветка' },
    { icon: 'tag', value: '0', label: 'Теги' },
    { icon: 'database', value: '26', label: 'KiB' },
];

const COMMITS = [
    { author: 'Даниил Шишкин', sha: '186c69ab18', date: '1 минуту назад', merge: true },
    { author: 'Janaane', sha: '8349b2f67c', message: 'Добавлена надпись в каждой строчке ФОРК 2026', date: '6 минут назад', purple: true },
    { author: 'Даниил', sha: 'e820da3cf9', message: 'Заменено имя на ФИО', date: '12 минут назад' },
    { author: 'Даниил', sha: 'fabb1ed7f6', message: 'Добавлен README.md с списком группы', date: '14 минут назад' },
];

const CommitRow = ({ commit }) => (
    <tr className="border-t border-[#e3e5e8] even:bg-[#f9f9f9] first:border-[#d0d7de]">
        <td className="py-1.5 pl-[10px]">
            <div className="flex items-center gap-[7px]">
                {commit.purple ? <PurpleIdenticon /> : <RedIdenticon />}
                <a href="#author">{commit.author}</a>
            </div>
        </td>
        <td>
            <a href="#sha" className="inline-block rounded border border-[#c5c7cc] bg-[#dfe1e5] px-[10px] py-[3px] align-middle font-['DejaVu_Sans_Mono','Liberation_Mono',monospace] text-xs leading-[17px]">{commit.sha}</a>
        </td>
        <td className="pt-1">
            {commit.merge ? (
                <div className="max-w-[560px] pb-[5px] pt-1 leading-[22px] text-[#3d434b]">
                    <a href="#commit">Merge pull request 'Добавлена надпись в каждой строчке ФОРК 2026' (</a>
                    <a href="#pr" className="text-[#4183c4]">#1</a>
                    <a href="#commit">) from<br />stud160551/test_fork_dima:fix-my-name into main</a>
                    <button type="button" aria-label="Показать описание" className="ml-1 inline-flex h-4 w-[22px] items-center justify-center gap-0.5 rounded border border-[#dcdee3] bg-[#f9fafc] align-middle">
                        <span className="h-0.5 w-0.5 bg-[#22262c]" />
                        <span className="h-0.5 w-0.5 bg-[#22262c]" />
                        <span className="h-0.5 w-0.5 bg-[#22262c]" />
                    </button>
                </div>
            ) : commit.message}
        </td>
        <td className="text-right">{commit.date}</td>
        <td>
            <div className="flex items-center justify-end gap-[18px] pr-[17px]">
                <button type="button" aria-label="Копировать хеш"><Icon name="copy" /></button>
                <a href="#source" aria-label="Просмотр исходника"><Icon name="file" /></a>
            </div>
        </td>
    </tr>
);

const CommitsPage = () => {
    const [query, setQuery] = useState('');

    return (
        <main className="mx-auto w-full max-w-[1282px] grow pt-[14px]">
            <div className="mx-px grid h-8 grid-cols-4 overflow-hidden rounded border border-[#d0d7de]">
                {STATS.map((stat, i) => (
                    <a
                        key={stat.label}
                        href="#stat"
                        className={i === 0 ? 'flex items-center justify-center gap-1 bg-[#d0d7de]' : 'flex items-center justify-center gap-1'}
                    >
                        <Icon name={stat.icon} />
                        <span className="pt-0.5"><b className="font-semibold">{stat.value}</b> {stat.label}</span>
                    </a>
                ))}
            </div>

            <div className="mx-px mt-2 flex gap-[3px]">
                <button type="button" className="flex h-[30px] items-center rounded border border-[#dcdee3] bg-[#f9fafc] px-2.5 font-semibold">
                    <Icon name="branch" /><span className="ml-2.5 mr-0.5 pt-0.5">main</span><Icon name="caret" />
                </button>
                <a href="#graph" className="flex h-[30px] items-center gap-1 rounded border border-[#dcdee3] bg-[#f9fafc] px-2.5 text-xs text-[#343a42]">
                    <Icon name="branch" /><span className="pt-0.5">Граф коммитов</span>
                </a>
            </div>

            <section className="mt-2 rounded border border-[#d0d7de]">
                <h4 className="flex h-[43px] items-center border-b border-[#d0d7de] bg-[#f1f3f5] px-3.5 text-sm font-semibold">4 Коммитов</h4>
                <form className="flex px-3.5 py-3.5 text-xs" onSubmit={(e) => e.preventDefault()}>
                    <input
                        type="text"
                        aria-label="Search commits"
                        placeholder="Search commits..."
                        value={query}
                        onChange={(e) => setQuery(e.target.value)}
                        className="h-9 min-w-0 grow rounded-l border border-[#d0d7de] px-[13px] pt-0.5 outline-none placeholder:text-[#7d838b]"
                    />
                    <div className="relative w-[130px]">
                        <select aria-label="Ветка" className="h-9 w-full appearance-none border-y border-[#d0d7de] bg-white pl-[13px] pt-0.5">
                            <option>This Branch</option>
                            <option>All Branches</option>
                        </select>
                        <span className="pointer-events-none absolute right-1.5 top-2.5"><Icon name="caret" size={15} /></span>
                    </div>
                    <button type="submit" aria-label="Поиск" className="flex h-9 w-[38px] items-center justify-center rounded-r border border-[#d0d7de] bg-[#f9fafc]"><Icon name="search" /></button>
                </form>
                <table className="w-full table-fixed border-t border-[#d0d7de]">
                    <thead>
                        <tr className="h-8 text-left">
                            <th className="w-[245px] pl-[10px] pt-0.5 font-normal">Автор</th>
                            <th className="w-[160px] pt-0.5 font-normal">SHA1</th>
                            <th className="pt-0.5 font-normal">Сообщение</th>
                            <th className="w-[140px] pt-0.5 text-right font-normal">Дата</th>
                            <th className="w-[85px]" aria-label="Действия" />
                        </tr>
                    </thead>
                    <tbody>
                        {COMMITS.map((commit) => <CommitRow key={commit.sha} commit={commit} />)}
                    </tbody>
                </table>
            </section>
        </main>
    );
};

const SiteFooter = () => (
    <footer className="flex h-[37px] items-center justify-between border-t border-[#d0d7de] bg-[#f6f7fa] px-5 pt-0.5">
        <div>
            <a href="#gitea" className="text-[#4183c4]">Работает на Gitea</a> Версия: 1.22.4 Страница: <b className="font-semibold">212ms</b> Шаблон: <b className="font-semibold">14ms</b>
        </div>
        <div className="flex items-center text-[#4183c4]">
            <button type="button" className="flex items-center gap-1 pr-1.5 text-[#212529]"><Icon name="globe" size={14} />Русский</button>
            <a href="#licenses" className="border-l border-[#d0d7de] pl-2 pr-1.5">Лицензии</a>
            <a href="#api" className="border-l border-[#d0d7de] pl-2">API</a>
        </div>
    </footer>
);

const TASKS = [
    { name: 'Пуск', art: <svg width="16" height="16" viewBox="0 0 16 16" fill="#fff"><path d="M0 2.200l6.500-.9v6.200H0ZM7.300 1.200L16 0v7.500H7.300ZM0 8.300h6.500v6.300L0 13.700ZM7.300 8.300H16V16l-8.700-1.200Z" /></svg> },
    { name: 'Поиск', art: <svg width="22" height="22" viewBox="0 0 22 22" fill="none" stroke="#fff" strokeWidth="2"><circle cx="13.500" cy="8.500" r="7" /><path d="M8.500 13.500L1 21" /></svg> },
    { name: 'Представление задач', art: <svg width="17" height="16" viewBox="0 0 17 16" fill="none" stroke="#fff" strokeWidth="1.200"><path d="M1 1v2h10V1M1 15v-2h10v2M1.500 5.500h9v5h-9ZM14.500 0v3M14.500 8.500V16" /><path d="M13 4h3v3h-3Z" fill="#fff" stroke="none" /></svg> },
    {
        name: 'Edge',
        art: (
            <svg width="24" height="24" viewBox="0 0 24 24">
                <circle cx="12" cy="12" r="12" fill="#1278cf" />
                <path d="M1 9C3 2 10-1 16 .8 22 3 25 9 23.500 13c-1.500 4-7 4-8.500 2 2-2 1-6-3-7S4 8 1 12Z" fill="#3ecb92" />
                <path d="M0 10C2 4 8 2 12 4.500" stroke="#2fb5dc" strokeWidth="3" fill="none" />
                <path d="M9 11c-1 5 3 9 11 8-3 4-7 5-10 4.500C6 21 6 14 9 11Z" fill="#0b4aa0" />
                <rect y="16" width="12" height="8" fill="#d98316" /><path d="M4 16v-1.500h4V16M0 19.500h12" stroke="#7a4300" fill="none" />
            </svg>
        ),
    },
    {
        name: 'Store',
        art: (
            <svg width="24" height="24" viewBox="0 0 24 24">
                <path d="M.5 6h23v15a2 2 0 0 1-2 2h-19a2 2 0 0 1-2-2Z" fill="#f1f1f1" />
                <path d="M6.500 6V2h11v4" stroke="#35b4ee" strokeWidth="2" fill="none" />
                <path d="M7.500 9.500h4v4h-4Z" fill="#f25022" /><path d="M12.500 9.500h4v4h-4Z" fill="#7fba00" /><path d="M7.500 14.500h4v4h-4Z" fill="#00a4ef" /><path d="M12.500 14.500h4v4h-4Z" fill="#ffb900" />
            </svg>
        ),
    },
    {
        name: 'Outlook',
        art: (
            <svg width="24" height="24" viewBox="0 0 24 24">
                <path d="M5 7l9-7 10 7v4L13 18 5 13Z" fill="#1471c4" /><path d="M12 15l12-7v13a2 2 0 0 1-2 2H7a2 2 0 0 1-2-2Z" fill="#38c1f3" /><path d="M24 6v5l-9 6-3-3Z" fill="#0c4f96" />
                <rect y="5" width="14" height="14" rx="1" fill="#0f64b8" /><ellipse cx="7" cy="12" rx="3" ry="3.500" fill="none" stroke="#fff" strokeWidth="2" />
            </svg>
        ),
    },
    {
        name: 'Steam',
        art: (
            <svg width="23" height="23" viewBox="0 0 23 23">
                <circle cx="11.500" cy="11.500" r="11.500" fill="#0f2a56" />
                <path d="M1 16a11.500 11.500 0 0 0 21 0c-6 2-15 2-21 0Z" fill="#1a5c96" />
                <path d="M0 12.500l9 3.500 5-5" stroke="#e8edf3" strokeWidth="3" fill="none" />
                <circle cx="15" cy="8.500" r="3.700" fill="#0f2a56" stroke="#e8edf3" strokeWidth="1.800" /><circle cx="8" cy="16" r="2.800" fill="#1a4679" stroke="#e8edf3" strokeWidth="1.300" />
            </svg>
        ),
    },
    { name: 'Яндекс', art: <span className="flex h-6 w-6 items-center justify-center rounded-full bg-[#fc3f1d] text-base font-bold text-white">Я</span> },
    {
        name: 'Gear',
        art: (
            <svg width="22" height="22" viewBox="0 0 22 22" fill="none" stroke="#e0202c">
                <circle cx="11" cy="11" r="10" fill="#1b1112" strokeWidth="1.300" /><circle cx="9.500" cy="11.500" r="3.500" strokeWidth="2.400" strokeDasharray="2.500 1" /><circle cx="9.500" cy="11.500" r="1.300" /><path d="M13 14l2.500-3V7M12.500 9l3-3.500 3 3.500" strokeWidth="1.800" />
            </svg>
        ),
    },
    {
        name: 'Проводник',
        state: 'open',
        art: (
            <svg width="22" height="20" viewBox="0 0 22 20">
                <path d="M0 1h8l2 2h12v15H0Z" fill="#ffd667" /><path d="M0 1h8l1.500 2H0Z" fill="#e5a21a" /><path d="M4 19v-7a1 1 0 0 1 1-1h12a1 1 0 0 1 1 1v7h-4v-4H8v4Z" fill="#3f97dc" />
            </svg>
        ),
    },
    {
        name: 'Player',
        art: (
            <svg width="22" height="22" viewBox="0 0 22 22" fill="none" strokeWidth="2">
                <circle cx="11" cy="11" r="10" stroke="#1b1c22" /><path d="M4 14A7.500 7.500 0 0 1 11 3.500" stroke="#35b5c9" /><path d="M11 3.500A7.500 7.500 0 0 1 18 14" stroke="#c9c63d" />
                <path d="M7 9c0 4 0 7 1.500 9M15 9c0 4 0 7-1.500 9M9.500 17l1.500-7 1.500 7" stroke="#a38bd0" strokeWidth="1.300" />
            </svg>
        ),
    },
    { name: 'Яндекс Браузер', state: 'active', art: <YandexY size={24} /> },
    {
        name: 'Telegram',
        state: 'alert',
        art: (
            <span className="relative">
                <svg width="22" height="22" viewBox="0 0 22 22"><circle cx="11" cy="11" r="11" fill="#2aa1da" /><path d="M3.500 10.500L17 5l-2.500 12-4-3-2 2-.5-4Z" fill="#fff" /></svg>
                <span className="absolute -bottom-1.5 left-2 rounded-sm bg-[#ef3b3b] px-0.5 text-[10px] leading-3 text-white">..69</span>
            </span>
        ),
    },
    {
        name: 'Терминал',
        state: 'open',
        art: (
            <svg width="23" height="19" viewBox="0 0 23 19"><rect width="23" height="19" fill="#9a9a9a" /><rect x="1" y="3" width="21" height="15" fill="#060606" /><path d="M4 6.500v3M4 6.500h2M4 9.500h2M8 7v.8M8 9v.8M10 6l1.500 4M13.500 10H17" stroke="#ddd" strokeWidth=".9" fill="none" /></svg>
        ),
    },
];

const TASK_STYLES = {
    open: 'w-10 h-full mx-1 flex items-center justify-center border-b-2 border-[#6fb3e8] pt-0.5',
    active: 'w-12 h-full flex items-center justify-center border-b-2 border-[#6fb3e8] bg-[#565351] pt-0.5',
    alert: 'w-12 h-full flex items-center justify-center border-b-2 border-[#ff7b12] bg-[#ac6029] pt-0.5',
};

const Taskbar = () => (
    <div className="flex h-[39px] items-center bg-[linear-gradient(to_right,#272320_0%,#2a2624_40%,#403e3c_52%,#484746_65%,#484746_92%,#2a2623_98%)] text-xs text-white">
        <div className="flex h-full items-center gap-px">
            {TASKS.map((task) => (
                <button key={task.name} type="button" aria-label={task.name} className={TASK_STYLES[task.state] || 'w-12 h-full flex items-center justify-center'}>
                    {task.art}
                </button>
            ))}
        </div>
        <div className="ml-auto flex h-full items-center gap-2 pr-1">
            <svg width="16" height="16" viewBox="0 0 16 16"><path d="M8 0l7 2v6c0 4-4 7-7 8-3-1-7-4-7-8V2Z" fill="#fff" /><path d="M8 1v14M1 7h14" stroke="#222" strokeWidth="1.200" /><path d="M11.500 7.500L16 16H7.500Z" fill="#ffc20e" /><path d="M11.700 10.500v3M11.700 14v1" stroke="#222" /></svg>
            <YandexY size={17} />
            <span className="relative h-4 w-4 rounded-full bg-[#2a93cc]"><span className="absolute left-1 top-1.5 rounded-sm bg-[#ef3b3b] px-0.5 text-[8px] leading-[10px]">..9</span></span>
            <svg width="16" height="16" viewBox="0 0 16 16" fill="none" stroke="#d8d8d8" strokeWidth="1.200"><path d="M1 14A13 13 0 0 1 14 2M4.500 14A10 10 0 0 1 14 5.500M8 14a6.500 6.500 0 0 1 6-5.500" /><circle cx="12.500" cy="13" r="1.500" fill="#fff" stroke="none" /></svg>
            <svg width="16" height="16" viewBox="0 0 16 16" fill="none" stroke="#fff" strokeWidth="1.200"><path d="M4 1.500c2-1 5-1 7 0M4 14.500c2 1 5 1 7 0M2.500 4.500h8v7h-8ZM11 7.500l2.500-2v5l-2.500-2" /><circle cx="4.700" cy="6.500" r=".6" /></svg>
            <svg width="16" height="16" viewBox="0 0 16 16" fill="none" stroke="#fff" strokeWidth="1.200"><path d="M1 4.500h12.500v7H1ZM13.500 6.500H15v3h-1.500" /><path d="M3 6.500h3v3H3Z" fill="#fff" /></svg>
            <svg width="17" height="16" viewBox="0 0 17 16" fill="none" stroke="#fff" strokeWidth="1.200"><path d="M1 6h2l3.500-3v10L3 10H1ZM9 6c1 1 1 3 0 4M11.500 4c2 2.500 2 5.500 0 8M14 2.500c3 3.500 3 7.500 0 11" /></svg>
            <span className="ml-0.5">РУС</span>
            <div className="ml-0.5 text-center leading-[18px]">
                <div>15:47</div>
                <div>02.02.2026</div>
            </div>
            <button type="button" aria-label="Уведомления" className="relative ml-1.5 h-6 w-6">
                <svg width="17" height="17" viewBox="0 0 17 17"><path d="M0 0h17v13h-9l-4 4v-4H0Z" fill="#fff" /><path d="M3 4h11M3 7h11M3 10h8" stroke="#333" /></svg>
                <span className="absolute -bottom-1 -right-0.5 flex h-4 w-4 items-center justify-center rounded-full border border-[#999] bg-[#33302e] text-[11px] font-semibold">2</span>
            </button>
            <span className="ml-1 h-full w-px bg-[#77726e]" />
        </div>
    </div>
);

const App = () => (
    <div className="flex min-h-screen flex-col bg-white font-['Open_Sans','Noto_Sans',sans-serif] text-[13px] text-[#212529]">
        <div className="flex grow">
            <Sidebar />
            <div className="flex min-w-0 grow flex-col">
                <TabStrip />
                <Toolbar />
                <InfoBar />
                <SiteNav />
                <RepoHeader />
                <CommitsPage />
                <SiteFooter />
            </div>
        </div>
        <Taskbar />
    </div>
);

export default App;
